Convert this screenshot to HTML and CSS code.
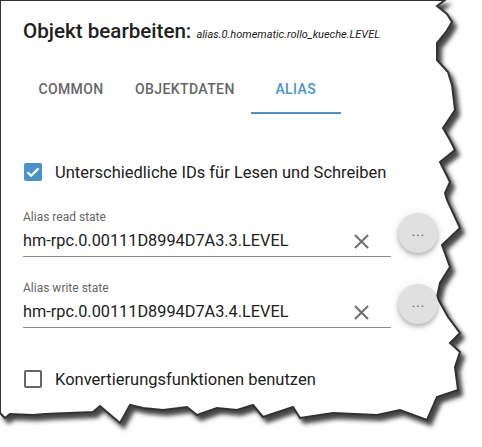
FILE: index.html
```html
<!DOCTYPE html>
<html lang="de">
<head>
    <meta charset="UTF-8">
    <meta name="viewport" content="width=device-width, initial-scale=1.0">
    <title>Objekt bearbeiten</title>
    <link rel="stylesheet" href="styles.css">
</head>
<body>
    <div class="sheet">
        <!-- torn paper edge of the screenshot -->
        <svg class="paper" width="482" height="447" viewBox="0 0 482 447">
            <defs>
                <filter id="torn-shadow" x="-5%" y="-5%" width="115%" height="115%">
                    <feDropShadow dx="4" dy="5" stdDeviation="2" flood-color="#333" flood-opacity="0.9"/>
                </filter>
            </defs>
            <polygon filter="url(#torn-shadow)" fill="#fff" stroke="#333" stroke-width="2"
                points="0,0 445,0 437,6 447,14 452,22 446,32 437,43 437,60 448,72 452,85 455,110 443,128 450,140 455,150 440,162 450,182 445,193 447,200 460,228 442,245 450,267 440,283 437,297 448,317 460,333 450,343 460,352 455,367 458,390 437,397 427,420 400,410 377,415 333,413 300,418 293,407 263,417 253,405 237,410 217,408 197,415 187,407 163,410 143,408 130,405 120,423 100,406 93,412 45,414 33,415 10,414 5,418 0,413"/>
        </svg>

        <div class="dialog">
            <h2 class="title">Objekt bearbeiten: <span class="title-id">alias.0.homematic.rollo_kueche.LEVEL</span></h2>

            <div class="tabs">
                <div class="tab">COMMON</div>
                <div class="tab">OBJEKTDATEN</div>
                <div class="tab active">ALIAS</div>
            </div>

            <label class="check-row first">
                <span class="box checked">
                    <svg viewBox="0 0 18 18" width="18" height="18"><path d="M3.5 9.2l3.6 3.6 7.4-7.4" fill="none" stroke="#fff" stroke-width="2.2"/></svg>
                </span>
                <span class="check-label">Unterschiedliche IDs für Lesen und Schreiben</span>
            </label>

            <div class="field-row">
                <div class="field">
                    <div class="field-label">Alias read state</div>
                    <div class="field-input">
                        <span class="value">hm-rpc.0.00111D8994D7A3.3.LEVEL</span>
                        <svg class="clear" viewBox="0 0 24 24" width="25" height="25"><path d="M19 6.41L17.59 5 12 10.59 6.41 5 5 6.41 10.59 12 5 17.59 6.41 19 12 13.41 17.59 19 19 17.59 13.41 12z"/></svg>
                    </div>
                </div>
                <button class="fab">...</button>
            </div>

            <div class="field-row">
                <div class="field">
                    <div class="field-label">Alias write state</div>
                    <div class="field-input">
                        <span class="value">hm-rpc.0.00111D8994D7A3.4.LEVEL</span>
                        <svg class="clear" viewBox="0 0 24 24" width="25" height="25"><path d="M19 6.41L17.59 5 12 10.59 6.41 5 5 6.41 10.59 12 5 17.59 6.41 19 12 13.41 17.59 19 19 17.59 13.41 12z"/></svg>
                    </div>
                </div>
                <button class="fab">...</button>
            </div>

            <label class="check-row last">
                <span class="box"></span>
                <span class="check-label">Konvertierungsfunktionen benutzen</span>
            </label>
        </div>
    </div>
</body>
</html>
```

FILE: styles.css
```css
body {
    margin: 0;
    background-color: #fff;
    font-family: Roboto, "Liberation Sans", Arial, sans-serif;
    color: #212121;
}

.sheet {
    position: relative;
    width: 482px;
    height: 447px;
    overflow: hidden;
}

.paper {
    position: absolute;
    left: 0;
    top: 0;
    z-index: 0;
}

.dialog {
    position: relative;
    z-index: 1;
    padding: 19px 0 0 23px;
}

.title {
    margin: 0;
    font-size: 20.6px;
    font-weight: 500;
    line-height: 24px;
    white-space: nowrap;
}

.title-id {
    font-size: 11px;
    font-weight: 400;
    font-style: italic;
}

.tabs {
    display: flex;
    margin-top: 19px;
    height: 48px;
}

.tab {
    display: flex;
    align-items: center;
    justify-content: center;
    min-width: 90px;
    padding: 0 16px;
    box-sizing: border-box;
    font-size: 14px;
    font-weight: 500;
    letter-spacing: 0.4px;
    color: #666;
    border-bottom: 2px solid transparent;
}

.tab:first-child {
    width: 96px;
}

.tab.active {
    color: #4b92cb;
    border-bottom-color: #4b92cb;
}

.check-row {
    display: flex;
    align-items: center;
    height: 42px;
    font-size: 16.5px;
}

.check-row.first {
    margin-top: 37px;
}

.check-row.last {
    margin-top: 30px;
}

.box {
    display: flex;
    width: 18px;
    height: 18px;
    margin-left: 1px;
    box-sizing: border-box;
    border: 2px solid #666;
    border-radius: 2px;
}

.box.checked {
    border: none;
    background-color: #4b92cb;
}

.check-label {
    margin-left: 13px;
}

.field-row {
    display: flex;
    margin-top: 17px;
}

.field-row + .field-row {
    margin-top: 24px;
}

.field {
    width: 368px;
    border-bottom: 1px solid #8a8a8a;
}

.field-label {
    font-size: 12px;
    line-height: 14px;
    color: #666;
}

.field-input {
    display: flex;
    align-items: center;
    justify-content: space-between;
    margin-top: 7px;
    padding-bottom: 6px;
    height: 19px;
}

.value {
    font-size: 16.3px;
    line-height: 19px;
}

.clear {
    fill: #707070;
    margin-right: 17px;
    margin-top: 1px;
}

.fab {
    width: 40px;
    height: 40px;
    margin: 3px 0 0 7px;
    border: none;
    border-radius: 50%;
    background-color: #e0e0e0;
    color: #555;
    font-family: Roboto, "Liberation Sans", Arial, sans-serif;
    font-size: 13px;
    letter-spacing: 1px;
    padding: 0 0 4px 1px;
    box-shadow: 0 2px 4px -1px rgba(0,0,0,0.2), 0 4px 5px 0 rgba(0,0,0,0.12), 0 1px 10px 0 rgba(0,0,0,0.1);
    cursor: pointer;
}
```
